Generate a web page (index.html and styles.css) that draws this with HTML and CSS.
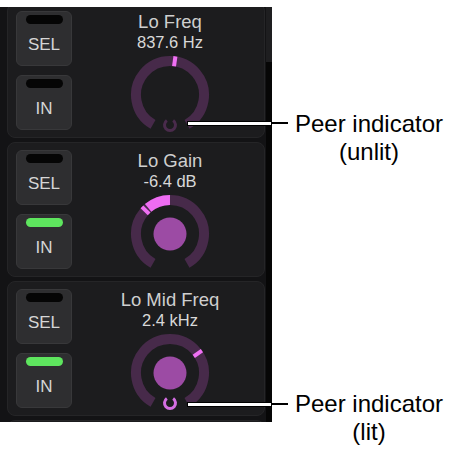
FILE: index.html
```html
<!DOCTYPE html>
<html lang="en">
<head>
    <meta charset="UTF-8">
    <meta name="viewport" content="width=device-width, initial-scale=1.0">
    <title>EQ Peer Indicator</title>
    <link rel="stylesheet" href="styles.css">
</head>
<body>
    <div class="figure">
        <!-- Console screen -->
        <div class="screen">
            <div class="strips">
                <!-- Lo Freq -->
                <div class="strip">
                    <div class="buttons">
                        <div class="btn"><span class="led"></span><span class="label">SEL</span></div>
                        <div class="btn"><span class="led"></span><span class="label">IN</span></div>
                    </div>
                    <div class="knob">
                        <div class="name">Lo Freq</div>
                        <div class="value">837.6 Hz</div>
                        <svg class="dial" width="80" height="80" viewBox="0 0 80 80">
                            <path class="track" d="M23 69.44 A34 34 0 1 1 57 69.44"/>
                            <line class="pointer" x1="44.03" y1="11.29" x2="45.42" y2="1.39"/>
                            <path class="peer" d="M43.15 65.5 A5.5 5.5 0 1 1 36.85 65.5"/>
                        </svg>
                    </div>
                </div>

                <!-- Lo Gain -->
                <div class="strip">
                    <div class="buttons">
                        <div class="btn"><span class="led"></span><span class="label">SEL</span></div>
                        <div class="btn"><span class="led on"></span><span class="label">IN</span></div>
                    </div>
                    <div class="knob">
                        <div class="name">Lo Gain</div>
                        <div class="value">-6.4 dB</div>
                        <svg class="dial" width="80" height="80" viewBox="0 0 80 80">
                            <path class="track" d="M23 69.44 A34 34 0 1 1 57 69.44"/>
                            <path class="arc" d="M18.14 13.95 A34 34 0 0 1 40 6"/>
                            <line class="pointer" x1="19.14" y1="19.85" x2="11.95" y2="12.91"/>
                            <circle class="cap" cx="40" cy="40" r="16.5"/>
                        </svg>
                    </div>
                </div>

                <!-- Lo Mid Freq -->
                <div class="strip">
                    <div class="buttons">
                        <div class="btn"><span class="led"></span><span class="label">SEL</span></div>
                        <div class="btn"><span class="led on"></span><span class="label">IN</span></div>
                    </div>
                    <div class="knob">
                        <div class="name">Lo Mid Freq</div>
                        <div class="value">2.4 kHz</div>
                        <svg class="dial" width="80" height="80" viewBox="0 0 80 80">
                            <path class="track" d="M23 69.44 A34 34 0 1 1 57 69.44"/>
                            <line class="pointer" x1="63.75" y1="23.35" x2="71.94" y2="17.63"/>
                            <circle class="cap" cx="40" cy="40" r="16.5"/>
                            <path class="peer lit" d="M43.15 65.5 A5.5 5.5 0 1 1 36.85 65.5"/>
                        </svg>
                    </div>
                </div>

                <!-- next strip, cut off -->
                <div class="strip"></div>
            </div>
            <div class="scrollbar"><div class="thumb"></div></div>
        </div>

        <!-- Callout labels -->
        <div class="notes">
            <div class="note note-unlit">Peer indicator<br>(unlit)</div>
            <div class="note note-lit">Peer indicator<br>(lit)</div>
        </div>

        <!-- Leader lines -->
        <div class="leader leader-unlit"></div>
        <div class="leader leader-lit"></div>
    </div>
</body>
</html>
```

FILE: styles.css
```css
body {
    margin: 0;
    background-color: #fff;
    font-family: "Liberation Sans", Arial, sans-serif;
}

.figure {
    position: relative;
    display: flex;
    width: 461px;
    height: 455px;
}

/* Console screen */
.screen {
    display: flex;
    width: 272px;
    height: 415px;
    margin-top: 7px;
    overflow: hidden;
    background-color: #131315;
}

.strips {
    display: flex;
    flex-direction: column;
    gap: 4px;
    width: 258px;
    margin-top: -4px;
    padding-left: 7px;
}

.strip {
    display: flex;
    flex-shrink: 0;
    box-sizing: border-box;
    height: 135px;
    padding: 7px 0 0 8px;
    background-color: #1c1c1e;
    border: 1px solid #252527;
    border-radius: 8px;
}

.scrollbar {
    width: 6px;
    margin-left: 1px;
    background-color: #060606;
}

.scrollbar .thumb {
    height: 55px;
    background-color: #1e1e20;
}

/* SEL / IN buttons */
.buttons {
    display: flex;
    flex-direction: column;
    gap: 9px;
}

.btn {
    display: flex;
    flex-direction: column;
    align-items: center;
    box-sizing: border-box;
    width: 56px;
    height: 55px;
    padding-top: 3px;
    background-color: #2e2e30;
    border: 1px solid #38383a;
    border-radius: 6px;
}

.led {
    width: 37px;
    height: 9px;
    border-radius: 5px;
    background-color: #050505;
}

.led.on {
    background-color: #5ee55e;
}

.label {
    margin-top: 11px;
    font-size: 17px;
    line-height: 20px;
    color: #d6d6d6;
}

/* Knob column */
.knob {
    flex: 1;
    display: flex;
    flex-direction: column;
    align-items: center;
    padding: 1px 0 0 4px;
}

.name {
    font-size: 18.5px;
    line-height: 20px;
    color: #cfcfcf;
}

.value {
    font-size: 16.5px;
    line-height: 20px;
    color: #d8d8d8;
}

.dial {
    display: block;
    margin-top: 3px;
}

.dial .track {
    fill: none;
    stroke: #472a4a;
    stroke-width: 10;
}

.dial .arc {
    fill: none;
    stroke: #ee6cf2;
    stroke-width: 10;
}

.dial .pointer {
    stroke: #f070f4;
    stroke-width: 4;
}

.dial .cap {
    fill: #9c4ba4;
}

.dial .peer {
    fill: none;
    stroke: #4a2b4c;
    stroke-width: 3;
}

.dial .peer.lit {
    stroke: #d46ee2;
}

/* Callouts */
.notes {
    flex: 1;
    display: flex;
    flex-direction: column;
    padding-left: 5px;
}

.note {
    font-size: 24px;
    line-height: 28px;
    text-align: center;
    color: #000;
}

.note-unlit {
    margin-top: 110px;
}

.note-lit {
    margin-top: 224px;
}

.leader {
    position: absolute;
    left: 187px;
    width: 83px;
    height: 3px;
    background-color: #fff;
    border: 1px solid #000;
}

.leader::after {
    content: "";
    position: absolute;
    left: 100%;
    top: 0;
    width: 17px;
    height: 2px;
    background-color: #000;
}

.leader-unlit {
    top: 121px;
}

.leader-lit {
    top: 402px;
}
```
